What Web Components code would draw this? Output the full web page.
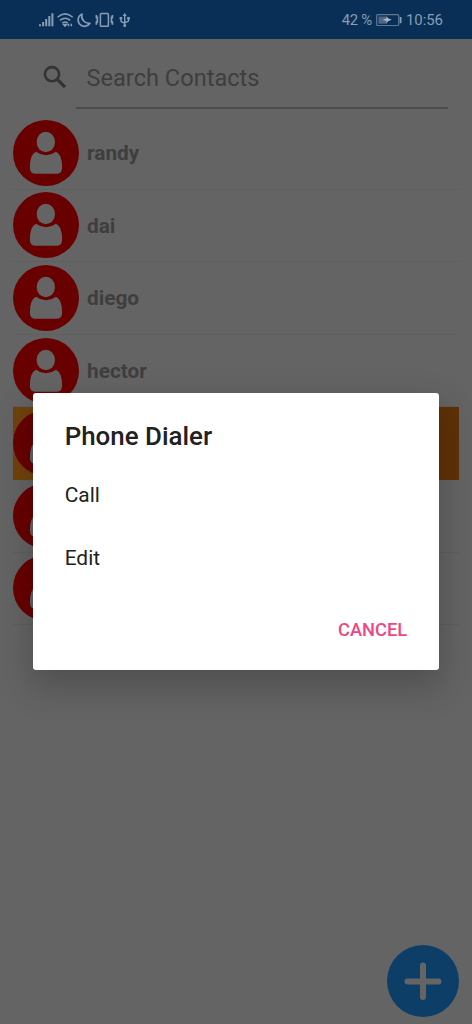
<!DOCTYPE html>
<html lang="en">
<head>
<meta charset="utf-8">
<title>Contacts</title>
<style>
html,body{margin:0;height:100%;overflow:hidden;background:#646464}
</style>
</head>
<body>
<contacts-app></contacts-app>
<script>
function define(name, html) {
  const t = document.createElement('template');
  t.innerHTML = html;
  customElements.define(name, class extends HTMLElement {
    constructor() {
      super();
      this.attachShadow({ mode: 'open' }).appendChild(t.content.cloneNode(true));
    }
  });
}

define('status-bar', `
<style>
:host{display:flex;justify-content:space-between;align-items:center;height:39px;padding:1px 29px 0 38px;box-sizing:border-box;background:#0a2f56;color:#869db5;font-size:14.9px}
svg{display:block}
.r{display:flex;align-items:center;gap:4px;white-space:nowrap}
.r span:first-child{letter-spacing:-.3px}
</style>
<svg width="93" height="18" viewBox="38 11 93 18" fill="none" stroke="#869db5" stroke-width="1.5">
  <path stroke-width="2" d="M40 24.2v2M43.1 22v4.2M46.2 19v7.2M49.3 16v10.2M52.4 13.2v13"/>
  <path d="M57.5 17.2q7.6-6.6 15.2 0M60 20.4q5.1-4.2 10.2 0M62.4 23.1q2.7-2 5.3 0"/>
  <path d="M63.6 24.400h2.800l-1.4 1.600zM68.500 23.800v2.400M71.300 23.800v2.400" stroke-width="1.500" fill="#869db5"/>
  <path stroke-linejoin="round" stroke-width="1.700" d="M82 14a6.400 6.400 0 1 0 7.900 9.300a7.300 7.300 0 0 1-7.900-9.300z"/>
  <rect x="100.4" y="13.6" width="8" height="12.6" rx=".8"/>
  <path d="M96.400 15v2.300h.9v4.900h-.9v2.500M112.400 15v2.300h-.9v4.900h.9v2.500" stroke-width="1.700"/>
  <path stroke-width="1.4" d="M124.7 15v10M120.9 18v2.7q0 1.5 3.8 2.2M128.5 17.8v2.9q0 1.2-3.8 1.8"/>
  <path fill="#869db5" stroke="none" d="M124.7 12.7l2 3.2h-4zM119.6 17.1h2.6v2.4h-2.6zM127.2 17.1h2.6v2.4h-2.6zM124.7 24a1.5 1.5 0 1 1 0 3a1.5 1.5 0 0 1 0-3z"/>
</svg>
<div class="r"><span>42 %</span>
<svg width="26" height="14" viewBox="0 0 26 14"><rect x=".7" y="1.7" width="22" height="10.8" rx="1" fill="none" stroke="#5f7995" stroke-width="1.2"/><path fill="#4d6784" d="M2.5 3.5h8.5v7.2H2.5z"/><path fill="#a9bbcc" d="M6.5 6.8l4-1.2V3.4l2 2.2 3.3 1.2-3.5 1.3-1.800 2.2v-2.3z"/><path fill="#869db5" d="M23.7 4h1.8v6.2h-1.8z"/></svg>
<span>10:56</span></div>`);

define('search-field', `
<style>
:host{display:flex;height:78px;padding:0 24px 0 42px;box-sizing:border-box;align-items:flex-start}
svg{display:block;margin-top:25px;flex:none}
.f{flex:1;margin-left:8px;height:70px;box-sizing:border-box;border-bottom:2px solid #4b4b4b;padding:24px 0 0 10.5px;font-size:23.6px;line-height:30px;color:#3e3e3e}
</style>
<svg width="26" height="26" viewBox="42 64 26 26" fill="none" stroke="#343434"><circle cx="52" cy="74.200" r="7.100" stroke-width="2.6"/><path d="M57 79.200l8 8" stroke-width="3.3"/></svg>
<div class="f"><slot></slot></div>`);

define('contact-row', `
<style>
:host{display:flex;align-items:center;height:72.6px;box-sizing:border-box;border-bottom:1px solid #5f5f5f;color:#3e3e3e;font-size:20.8px;font-weight:700}
:host([selected]){background:linear-gradient(90deg,#71430c 0,#5f3106 100%);border-color:transparent}
svg{display:block;flex:none;margin-right:8px}
.n{padding-top:1px}
</style>
<svg width="66" height="66" viewBox="0 0 66 66"><circle cx="33" cy="33" r="33" fill="#690000"/><path fill="#646464" d="M23 31.700Q16.900 34.200 16.900 47.600Q16.900 53.800 22 53.800H44Q49.100 53.800 49.100 47.600Q49.100 34.200 43 31.700Q33 38.800 23 31.700z"/><ellipse cx="32.800" cy="22" rx="10.300" ry="11.200" fill="#690000"/><ellipse cx="32.800" cy="22" rx="9.200" ry="10.200" fill="#646464"/></svg>
<span class="n"><slot></slot></span>`);

define('contact-list', `<style>:host{display:block;padding:0 13px}</style><slot></slot>`);

define('add-button', `
<style>
:host{position:absolute;right:13px;bottom:7px;width:72px;height:72px;border-radius:50%;background:#0d3e67}
svg{display:block}
</style>
<svg width="72" height="72" viewBox="0 0 72 72" stroke="#646464" stroke-width="6" stroke-linecap="round"><path d="M36 20.500v31.500M20.500 36.500h31"/></svg>`);

define('option-dialog', `
<style>
:host{position:absolute;left:32.700px;top:393px;width:406.500px;height:277px;box-sizing:border-box;background:#fff;border-radius:3px;box-shadow:0 14px 34px 4px rgba(0,0,0,.2);padding:24px 32px 0;color:#212121;display:flex;flex-direction:column}
h2{margin:0 0 15px;font-size:25.900px;line-height:38px;font-weight:500}
.o{display:flex;flex-direction:column;flex:none;height:126px;font-size:20.900px}
::slotted(div){height:63px;flex:none;line-height:50px}
.c{align-self:flex-end;margin-top:22px;font-size:18.3px;line-height:24px;font-weight:500;color:#ec4784}
</style>
<h2><slot name="title"></slot></h2>
<div class="o"><slot></slot></div>
<div class="c"><slot name="action"></slot></div>`);

define('contacts-app', `
<style>
:host{display:block;position:relative;width:472px;height:1024px;overflow:hidden;background:#646464;font-family:Roboto,sans-serif}
</style>
<status-bar></status-bar>
<search-field>Search Contacts</search-field>
<contact-list>
  <contact-row>randy</contact-row>
  <contact-row>dai</contact-row>
  <contact-row>diego</contact-row>
  <contact-row>hector</contact-row>
  <contact-row selected></contact-row>
  <contact-row></contact-row>
  <contact-row></contact-row>
</contact-list>
<add-button></add-button>
<option-dialog>
  <span slot="title">Phone Dialer</span>
  <div>Call</div>
  <div>Edit</div>
  <span slot="action">CANCEL</span>
</option-dialog>`);
</script>
</body>
</html>
